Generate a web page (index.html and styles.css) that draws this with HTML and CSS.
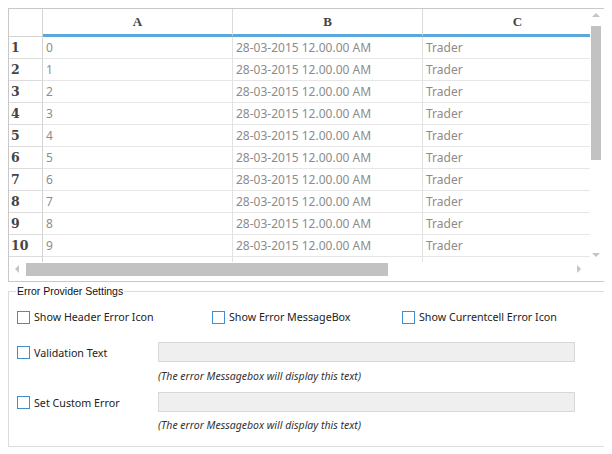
FILE: index.html
```html
<!DOCTYPE html>
<html>
<head>
<meta charset="utf-8">
<link rel="stylesheet" href="styles.css">
</head>
<body>
<div class="grid-box">
  <div class="table">
    <div class="row head">
      <div class="corner"></div>
      <div class="colhead">A</div>
      <div class="colhead">B</div>
      <div class="colhead">C</div>
    </div>
    <div class="row"><div class="rh">1</div><div class="cell">0</div><div class="cell">28-03-2015 12.00.00 AM</div><div class="cell">Trader</div></div>
    <div class="row"><div class="rh">2</div><div class="cell">1</div><div class="cell">28-03-2015 12.00.00 AM</div><div class="cell">Trader</div></div>
    <div class="row"><div class="rh">3</div><div class="cell">2</div><div class="cell">28-03-2015 12.00.00 AM</div><div class="cell">Trader</div></div>
    <div class="row"><div class="rh">4</div><div class="cell">3</div><div class="cell">28-03-2015 12.00.00 AM</div><div class="cell">Trader</div></div>
    <div class="row"><div class="rh">5</div><div class="cell">4</div><div class="cell">28-03-2015 12.00.00 AM</div><div class="cell">Trader</div></div>
    <div class="row"><div class="rh">6</div><div class="cell">5</div><div class="cell">28-03-2015 12.00.00 AM</div><div class="cell">Trader</div></div>
    <div class="row"><div class="rh">7</div><div class="cell">6</div><div class="cell">28-03-2015 12.00.00 AM</div><div class="cell">Trader</div></div>
    <div class="row"><div class="rh">8</div><div class="cell">7</div><div class="cell">28-03-2015 12.00.00 AM</div><div class="cell">Trader</div></div>
    <div class="row"><div class="rh">9</div><div class="cell">8</div><div class="cell">28-03-2015 12.00.00 AM</div><div class="cell">Trader</div></div>
    <div class="row"><div class="rh">10</div><div class="cell">9</div><div class="cell">28-03-2015 12.00.00 AM</div><div class="cell">Trader</div></div>
    <div class="row partial"><div class="rh"></div><div class="cell"></div><div class="cell"></div><div class="cell"></div></div>
  </div>
  <div class="vscroll">
    <div class="arr-up"></div>
    <div class="vthumb"></div>
    <div class="arr-down"></div>
  </div>
  <div class="hscroll">
    <div class="arr-left"></div>
    <div class="hthumb"></div>
    <div class="arr-right"></div>
  </div>
  <div class="sc-corner"></div>
</div>

<div class="group">
  <div class="legend">Error Provider Settings</div>
  <div class="opts">
    <label class="chk w1"><span class="box"></span>Show Header Error Icon</label>
    <label class="chk w2"><span class="box"></span>Show Error MessageBox</label>
    <label class="chk"><span class="box"></span>Show Currentcell Error Icon</label>
  </div>
  <div class="field first">
    <label class="chk"><span class="box"></span>Validation Text</label>
    <div class="input"></div>
  </div>
  <div class="hint h1">(The error Messagebox will display this text)</div>
  <div class="field second">
    <label class="chk"><span class="box"></span>Set Custom Error</label>
    <div class="input"></div>
  </div>
  <div class="hint h2">(The error Messagebox will display this text)</div>
</div>
</body>
</html>
```

FILE: styles.css
```css
html, body { background: #fff; }
body {
  margin: 8px;
  font-family: "Noto Sans", "Liberation Sans", sans-serif;
}

.grid-box {
  width: 595px;
  height: 272px;
  border: 1px solid #c8c8c8;
  display: grid;
  grid-template-columns: 581px 14px;
  grid-template-rows: 253px 19px;
  background: #fff;
}

.table {
  overflow: hidden;
  display: flex;
  flex-direction: column;
}

.row {
  display: grid;
  grid-template-columns: 34px 190px 190px 190px;
  height: 22px;
  flex: none;
}
.row.head { height: 28px; }
.row.partial { height: 6px; }

.corner {
  border-right: 1px solid #d4d4d4;
  border-bottom: 1px solid #d4d4d4;
}
.colhead {
  border-right: 1px solid #dadada;
  border-bottom: 3px solid #5aa8dc;
  display: flex;
  align-items: center;
  justify-content: center;
  font-family: "Liberation Serif", serif;
  font-weight: bold;
  font-size: 13px;
  color: #444;
}

.rh {
  border-right: 1px solid #d4d4d4;
  border-bottom: 1px solid #dcdcdc;
  display: flex;
  align-items: center;
  padding-left: 2px;
  font-family: "DejaVu Serif", serif;
  font-weight: bold;
  font-size: 12.5px;
  color: #444;
}
.cell {
  border-right: 1px solid #e2e2e2;
  border-bottom: 1px solid #e6e6e6;
  display: flex;
  align-items: center;
  padding-left: 3px;
  font-size: 12px;
  color: #8c8c8c;
  white-space: nowrap;
}
.partial .rh, .partial .cell { border-bottom: none; }

.vscroll {
  display: flex;
  flex-direction: column;
  padding-top: 4px;
  padding-bottom: 5px;
}
.arr-up {
  margin-left: 2px;
  width: 0; height: 0;
  border-left: 4px solid transparent;
  border-right: 4px solid transparent;
  border-bottom: 4px solid #c4c4c4;
}
.vthumb {
  margin-top: 9px;
  margin-left: 1px;
  width: 10px;
  height: 134px;
  background: #c2c2c2;
}
.arr-down {
  margin-top: auto;
  margin-left: 2px;
  width: 0; height: 0;
  border-left: 4px solid transparent;
  border-right: 4px solid transparent;
  border-top: 4px solid #c4c4c4;
}

.hscroll {
  display: flex;
  align-items: flex-start;
  padding-top: 1px;
  padding-left: 6px;
}
.arr-left {
  margin-top: 2px;
  width: 0; height: 0;
  border-top: 4px solid transparent;
  border-bottom: 4px solid transparent;
  border-right: 4px solid #c4c4c4;
}
.hthumb {
  margin-left: 7px;
  width: 362px;
  height: 13px;
  background: #c2c2c2;
}
.arr-right {
  margin-top: 2px;
  margin-left: auto;
  margin-right: 9px;
  width: 0; height: 0;
  border-top: 4px solid transparent;
  border-bottom: 4px solid transparent;
  border-left: 4px solid #c4c4c4;
}

.group {
  position: relative;
  margin-top: 9px;
  width: 587px;
  height: 154px;
  border: 1px solid #dcdcdc;
  padding-left: 8px;
  font-size: 10.7px;
  color: #222;
}
.legend {
  position: absolute;
  top: -8px;
  left: 7px;
  padding: 0 1px;
  background: #fff;
  line-height: 15px;
  font-family: "Liberation Sans", sans-serif;
  font-size: 10.5px;
  color: #111;
}

.chk {
  display: flex;
  align-items: center;
  gap: 4px;
  white-space: nowrap;
  color: #222;
}
.box {
  width: 11px;
  height: 11px;
  border: 1px solid #3d8fd0;
  background: #fff;
  flex: none;
}

.opts {
  display: flex;
  height: 20px;
  align-items: center;
  margin-top: 15px;
}
.w1 { width: 195px; }
.w2 { width: 190px; }

.field {
  display: grid;
  grid-template-columns: 141px 417px;
  align-items: center;
  height: 20px;
}
.field.first { margin-top: 15px; }
.field.second { margin-top: 9px; }
.field .chk { margin-top: 1px; }

.input {
  height: 18px;
  background: #efefef;
  border: 1px solid #d8d8d8;
}

.hint {
  margin-left: 141px;
  line-height: 14px;
  font-style: italic;
  font-size: 10.5px;
  color: #333;
}
.hint.h1 { margin-top: 7px; }
.hint.h2 { margin-top: 6px; }
```
